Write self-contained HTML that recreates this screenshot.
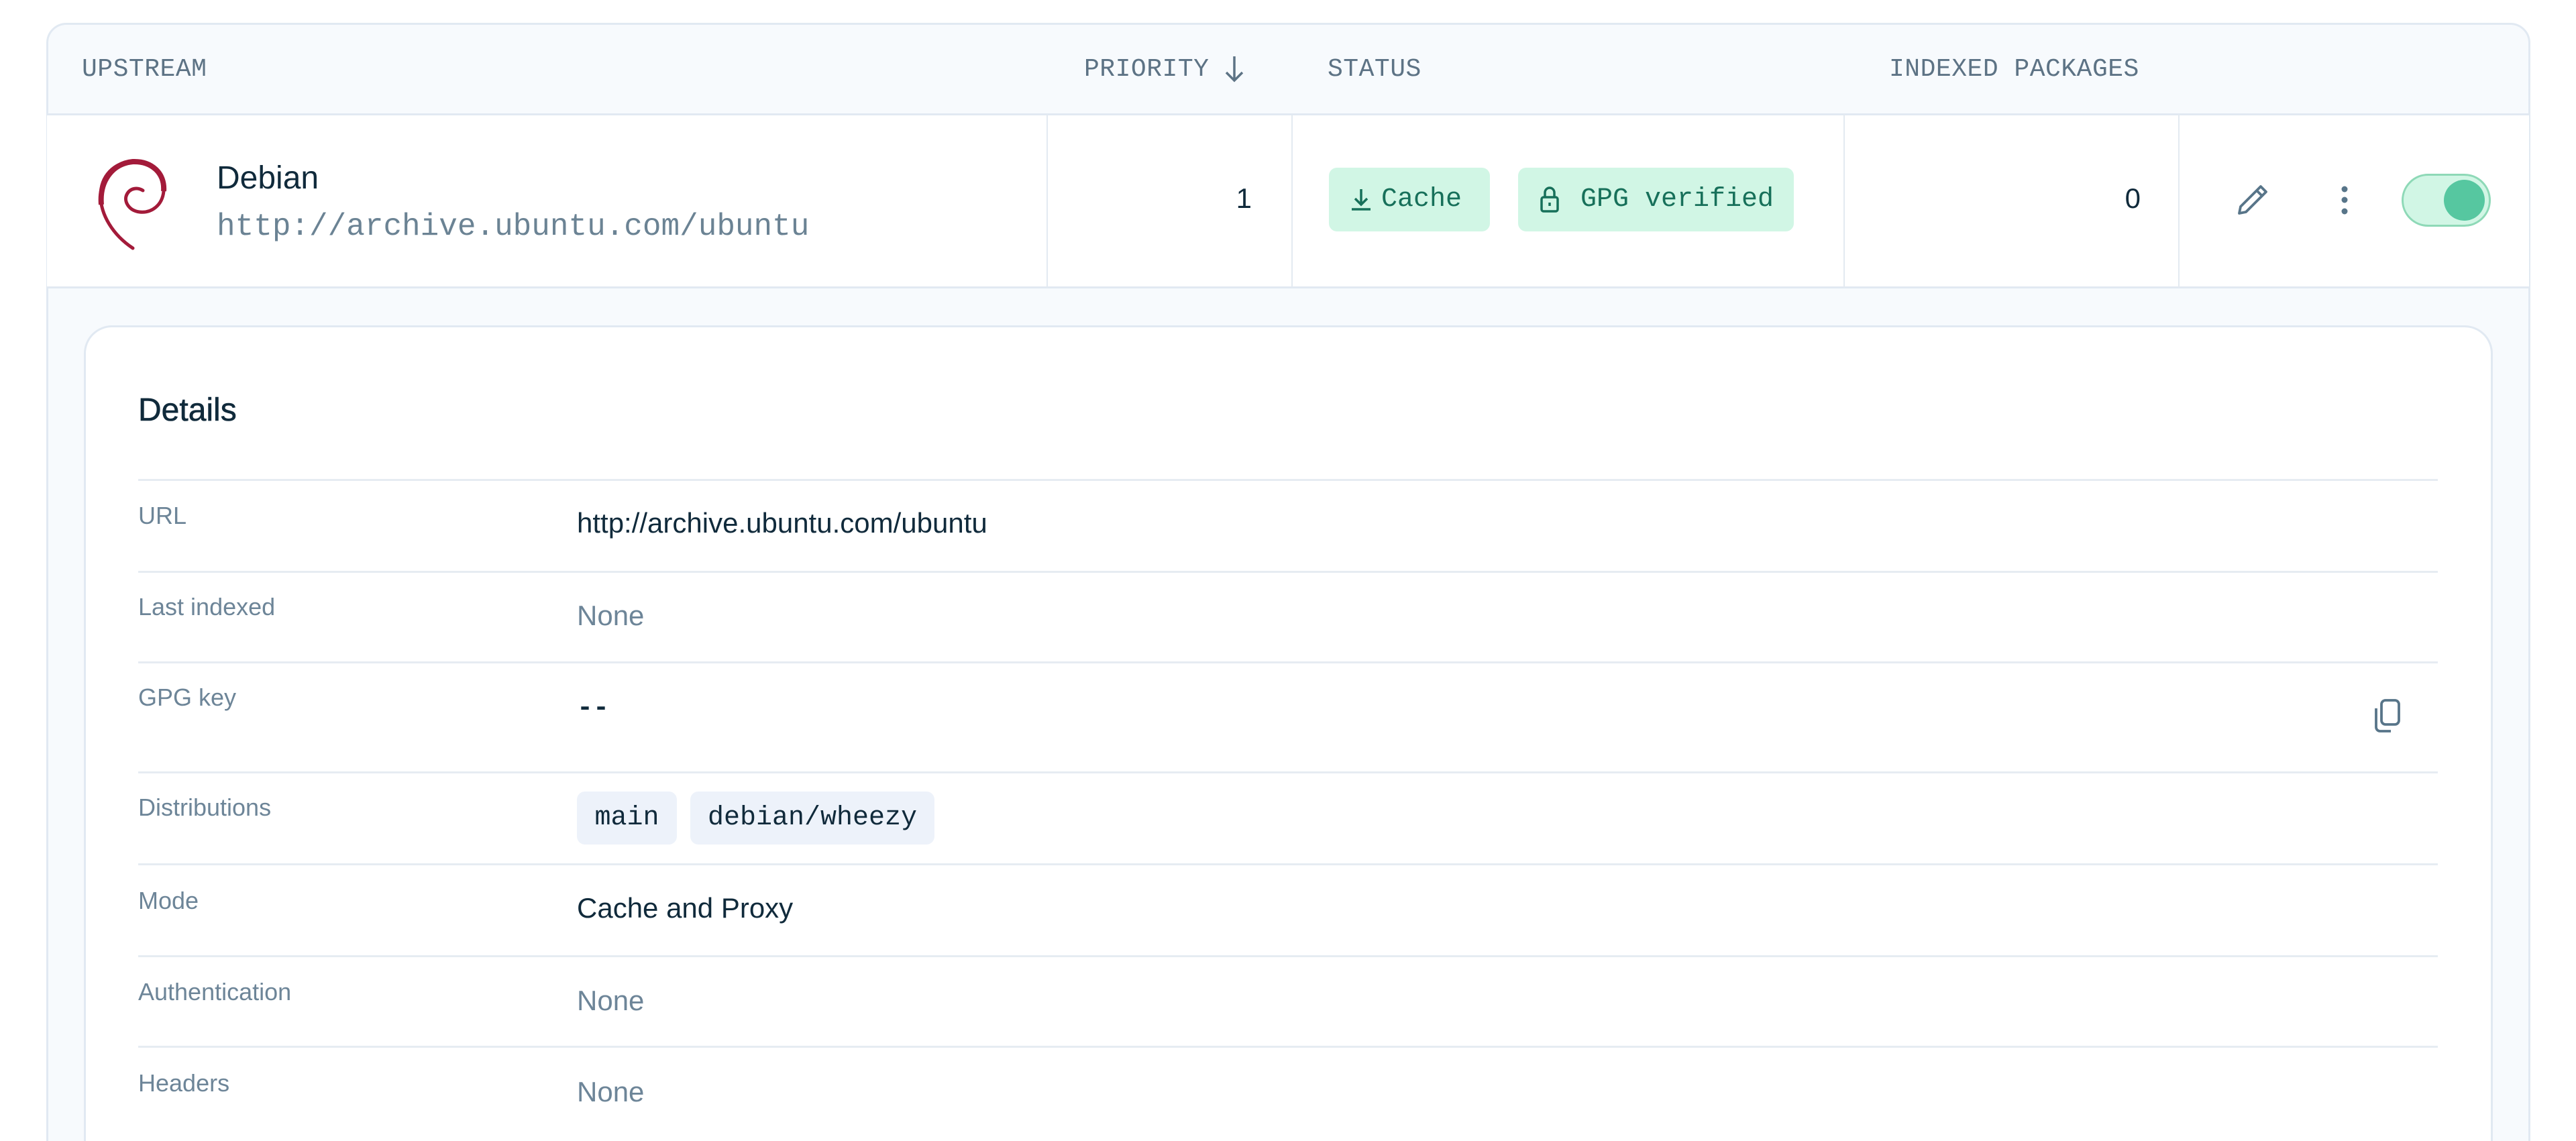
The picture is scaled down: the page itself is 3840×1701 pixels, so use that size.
<!DOCTYPE html>
<html style="width:3840px;height:1701px;overflow:hidden"><head><meta charset="utf-8"><style>
*{margin:0;padding:0;box-sizing:border-box}
body{width:3840px;height:1701px;background:#fff;position:relative;overflow:hidden;font-family:"Liberation Sans",sans-serif;color:#102a3b}
.abs{position:absolute}
.mono{font-family:"Liberation Mono",monospace}
.hd{position:absolute;top:82px;font-size:38px;color:#5d7385;letter-spacing:0.5px;font-family:"Liberation Mono",monospace}
.vl{position:absolute;top:171px;height:258px;width:2px;background:#e3eaf1}
.badge{position:absolute;top:250px;height:95px;background:#d1f6e5;border-radius:12px;color:#17705a;font-family:"Liberation Mono",monospace;font-size:40px;line-height:95px}
.line{position:absolute;left:206px;width:3428px;height:3px;background:#e6ecf2}
.lab{position:absolute;left:206px;font-size:36px;color:#6d8598}
.val{position:absolute;left:860px;font-size:42px}
.gray{color:#6d8598}
.pill{position:absolute;top:1180px;height:79px;background:#edf2fa;border-radius:12px;font-family:"Liberation Mono",monospace;font-size:40px;line-height:79px;text-align:center;color:#102a3b}
</style></head><body>
<div class="abs" style="left:69px;top:34px;width:3703px;height:1700px;background:#f7fafd;border:3px solid #e1e9f2;border-radius:30px"></div>
<div class="abs" style="left:70px;top:169px;width:3700px;height:3px;background:#e1e9f2"></div>
<div class="abs" style="left:70px;top:172px;width:3700px;height:256px;background:#fff"></div>
<div class="abs" style="left:70px;top:427px;width:3700px;height:3px;background:#e1e9f2"></div>
<div class="hd" style="left:122px">UPSTREAM</div>
<div class="hd" style="left:1616px">PRIORITY</div>
<svg class="abs" style="left:1822px;top:80px" width="36" height="46" viewBox="0 0 36 46"><path d="M18 4V40M6 28L18 40L30 28" stroke="#5d7385" stroke-width="3.5" fill="none"/></svg>
<div class="hd" style="left:1979px">STATUS</div>
<div class="hd" style="left:2816px">INDEXED PACKAGES</div>
<div class="vl" style="left:1560px"></div>
<div class="vl" style="left:1925px"></div>
<div class="vl" style="left:2748px"></div>
<div class="vl" style="left:3247px"></div>
<svg class="abs" style="left:0;top:0" width="300" height="400"><path d="M198 370C168 350 150 320 150 292C150 262 170 242 198 241C226 240 246 258 244 285C242 306 226 318 208 316C192 314 184 300 189 290C194 280 205 279 213 284" stroke="#a31b3a" stroke-width="5" fill="none" stroke-linecap="round"/><path d="M151 305C148 272 166 244 198 241C226 240 246 258 244 285" stroke="#a31b3a" stroke-width="8" fill="none"/></svg>
<div class="abs" style="left:323px;top:238px;font-size:48px;color:#102a3b">Debian</div>
<div class="abs mono" style="left:323px;top:312px;font-size:46px;color:#6b8394">http://archive.ubuntu.com/ubuntu</div>
<div class="abs" style="left:1800px;top:272px;width:66px;text-align:right;font-size:42px">1</div>
<div class="badge" style="left:1981px;width:240px"><svg class="abs" style="left:28px;top:28px" width="40" height="40" viewBox="0 0 40 40"><path d="M20 4V26M11 18L20 27L29 18M6 34H34" stroke="#17705a" stroke-width="3.5" fill="none"/></svg><span style="position:absolute;left:78px">Cache</span></div>
<div class="badge" style="left:2263px;width:411px"><svg class="abs" style="left:30px;top:27px" width="34" height="42" viewBox="0 0 34 42"><rect x="5" y="17" width="24" height="21" rx="3" stroke="#17705a" stroke-width="3.5" fill="none"/><path d="M10 17V10A7 7 0 0 1 24 10V17M17 25V30" stroke="#17705a" stroke-width="3.5" fill="none"/></svg><span style="position:absolute;left:93px">GPG verified</span></div>
<div class="abs" style="left:3120px;top:272px;width:71px;text-align:right;font-size:42px">0</div>
<svg class="abs" style="left:3330px;top:270px" width="56" height="56" viewBox="0 0 56 56"><path d="M8 48L10 38L40 8L48 16L18 46Z M34 14L42 22" stroke="#587589" stroke-width="3.8" fill="none" stroke-linejoin="round"/></svg>
<svg class="abs" style="left:3484px;top:274px" width="22" height="50"><circle cx="11" cy="8" r="4.5" fill="#587589"/><circle cx="11" cy="24" r="4.5" fill="#587589"/><circle cx="11" cy="41" r="4.5" fill="#587589"/></svg>
<div class="abs" style="left:3580px;top:259px;width:133px;height:79px;border-radius:40px;background:#d1f6e5;border:3px solid #8ed9b7"></div>
<div class="abs" style="left:3643px;top:268px;width:61px;height:61px;border-radius:50%;background:#56c7a0"></div>
<div class="abs" style="left:125px;top:485px;width:3591px;height:1300px;background:#fff;border:3px solid #e1e9f2;border-radius:42px"></div>
<div class="abs" style="left:206px;top:584px;font-size:48px;color:#102a3b;-webkit-text-stroke:0.6px #102a3b">Details</div>
<div class="line" style="top:714px"></div>
<div class="line" style="top:851px"></div>
<div class="line" style="top:986px"></div>
<div class="line" style="top:1150px"></div>
<div class="line" style="top:1287px"></div>
<div class="line" style="top:1424px"></div>
<div class="line" style="top:1559px"></div>
<div class="lab" style="top:748px">URL</div>
<div class="val" style="top:756px">http://archive.ubuntu.com/ubuntu</div>
<div class="lab" style="top:884px">Last indexed</div>
<div class="val gray" style="top:894px">None</div>
<div class="lab" style="top:1019px">GPG key</div>
<div class="val mono" style="top:1034px;font-size:40px;font-weight:bold">--</div>
<svg class="abs" style="left:3534px;top:1040px" width="48" height="56" viewBox="0 0 48 56"><rect x="16" y="4" width="26" height="36" rx="6" stroke="#587589" stroke-width="3.8" fill="none"/><path d="M8 16V44A6 6 0 0 0 14 50H30" stroke="#587589" stroke-width="3.8" fill="none"/></svg>
<div class="lab" style="top:1183px">Distributions</div>
<div class="pill" style="left:860px;width:149px">main</div>
<div class="pill" style="left:1029px;width:364px">debian/wheezy</div>
<div class="lab" style="top:1322px">Mode</div>
<div class="val" style="top:1330px">Cache and Proxy</div>
<div class="lab" style="top:1458px">Authentication</div>
<div class="val gray" style="top:1468px">None</div>
<div class="lab" style="top:1594px">Headers</div>
<div class="val gray" style="top:1604px">None</div>
</body></html>
